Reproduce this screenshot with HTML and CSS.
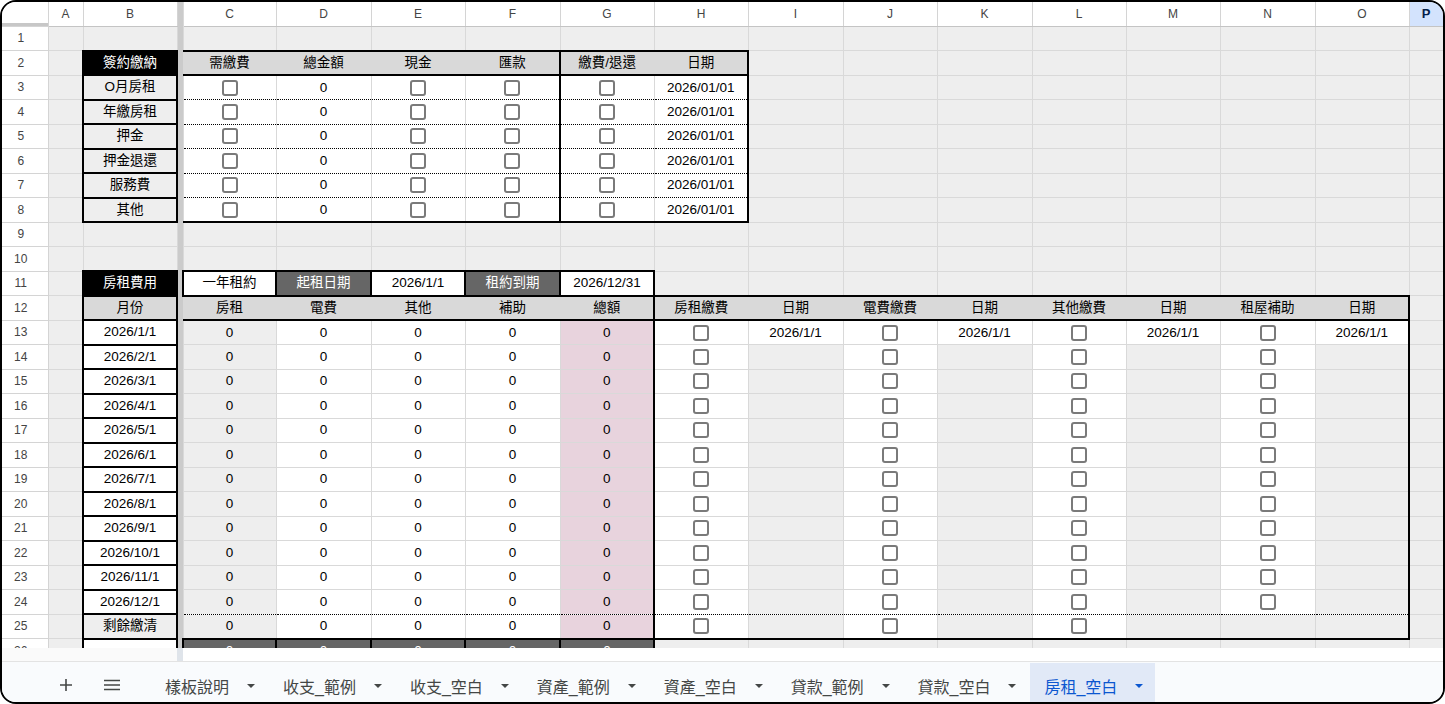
FILE: index.html
```html
<!DOCTYPE html>
<html lang="zh-Hant">
<head>
    <meta charset="UTF-8">
    <title>房租_空白</title>
    <link rel="stylesheet" href="styles.css">
</head>
<body>
<div class="window">
    <div class="grid-wrap">
        <table class="sheet">
            <colgroup>
                <col style="width:46px"><col style="width:35px"><col style="width:94px"><col style="width:6px">
                <col style="width:93px"><col style="width:95px"><col style="width:94px"><col style="width:95px">
                <col style="width:94px"><col style="width:94px"><col style="width:95px"><col style="width:94px">
                <col style="width:95px"><col style="width:94px"><col style="width:94px"><col style="width:95px">
                <col style="width:94px"><col style="width:34px">
            </colgroup>
            <thead>
                <tr class="hdr">
                    <th class="corner"></th><th class="col">A</th><th class="col">B</th><td class="fz"></td>
                    <th class="col">C</th><th class="col">D</th><th class="col">E</th><th class="col">F</th><th class="col">G</th><th class="col">H</th><th class="col">I</th>
                    <th class="col">J</th><th class="col">K</th><th class="col">L</th><th class="col">M</th><th class="col">N</th><th class="col">O</th><th class="col sel">P</th>
                </tr>
            </thead>
            <tbody>
                <tr><th class="rn">1</th><td></td><td></td><td class="fz"></td><td></td><td></td><td></td><td></td><td></td><td></td><td></td><td></td><td></td><td></td><td></td><td></td><td></td><td></td></tr>

                <!-- 簽約繳納 -->
                <tr><th class="rn">2</th><td></td><td class="blk box">簽約繳納</td><td class="fz"></td>
                    <td class="hd t b">需繳費</td><td class="hd t b">總金額</td><td class="hd t b">現金</td><td class="hd t b r">匯款</td><td class="hd t b">繳費/退還</td><td class="hd t b r">日期</td>
                    <td></td><td></td><td></td><td></td><td></td><td></td><td></td><td></td></tr>
                <tr><th class="rn">3</th><td></td><td class="box">O月房租</td><td class="fz"></td>
                    <td class="w d"><span class="cb"></span></td><td class="w d">0</td><td class="w d"><span class="cb"></span></td><td class="w d r"><span class="cb"></span></td><td class="w d"><span class="cb"></span></td><td class="w d r">2026/01/01</td>
                    <td></td><td></td><td></td><td></td><td></td><td></td><td></td><td></td></tr>
                <tr><th class="rn">4</th><td></td><td class="box">年繳房租</td><td class="fz"></td>
                    <td class="w d"><span class="cb"></span></td><td class="w d">0</td><td class="w d"><span class="cb"></span></td><td class="w d r"><span class="cb"></span></td><td class="w d"><span class="cb"></span></td><td class="w d r">2026/01/01</td>
                    <td></td><td></td><td></td><td></td><td></td><td></td><td></td><td></td></tr>
                <tr><th class="rn">5</th><td></td><td class="box">押金</td><td class="fz"></td>
                    <td class="w d"><span class="cb"></span></td><td class="w d">0</td><td class="w d"><span class="cb"></span></td><td class="w d r"><span class="cb"></span></td><td class="w d"><span class="cb"></span></td><td class="w d r">2026/01/01</td>
                    <td></td><td></td><td></td><td></td><td></td><td></td><td></td><td></td></tr>
                <tr><th class="rn">6</th><td></td><td class="box">押金退還</td><td class="fz"></td>
                    <td class="w d"><span class="cb"></span></td><td class="w d">0</td><td class="w d"><span class="cb"></span></td><td class="w d r"><span class="cb"></span></td><td class="w d"><span class="cb"></span></td><td class="w d r">2026/01/01</td>
                    <td></td><td></td><td></td><td></td><td></td><td></td><td></td><td></td></tr>
                <tr><th class="rn">7</th><td></td><td class="box">服務費</td><td class="fz"></td>
                    <td class="w d"><span class="cb"></span></td><td class="w d">0</td><td class="w d"><span class="cb"></span></td><td class="w d r"><span class="cb"></span></td><td class="w d"><span class="cb"></span></td><td class="w d r">2026/01/01</td>
                    <td></td><td></td><td></td><td></td><td></td><td></td><td></td><td></td></tr>
                <tr><th class="rn">8</th><td></td><td class="box">其他</td><td class="fz"></td>
                    <td class="w d b"><span class="cb"></span></td><td class="w d b">0</td><td class="w d b"><span class="cb"></span></td><td class="w d b r"><span class="cb"></span></td><td class="w d b"><span class="cb"></span></td><td class="w d b r">2026/01/01</td>
                    <td></td><td></td><td></td><td></td><td></td><td></td><td></td><td></td></tr>

                <tr><th class="rn">9</th><td></td><td></td><td class="fz"></td><td></td><td></td><td></td><td></td><td></td><td></td><td></td><td></td><td></td><td></td><td></td><td></td><td></td><td></td></tr>
                <tr><th class="rn">10</th><td></td><td></td><td class="fz"></td><td></td><td></td><td></td><td></td><td></td><td></td><td></td><td></td><td></td><td></td><td></td><td></td><td></td><td></td></tr>

                <!-- 房租費用 -->
                <tr><th class="rn">11</th><td></td><td class="blk box">房租費用</td><td class="fz"></td>
                    <td class="w box">一年租約</td><td class="dk box">起租日期</td><td class="w box">2026/1/1</td><td class="dk box">租約到期</td><td class="w box">2026/12/31</td>
                    <td></td><td></td><td></td><td></td><td></td><td></td><td></td><td></td><td></td></tr>
                <tr><th class="rn">12</th><td></td><td class="hd box">月份</td><td class="fz"></td>
                    <td class="hd t b">房租</td><td class="hd t b">電費</td><td class="hd t b">其他</td><td class="hd t b">補助</td><td class="hd t b r">總額</td>
                    <td class="hd t b">房租繳費</td><td class="hd t b">日期</td><td class="hd t b">電費繳費</td><td class="hd t b">日期</td><td class="hd t b">其他繳費</td><td class="hd t b">日期</td><td class="hd t b">租屋補助</td><td class="hd t b r">日期</td><td></td></tr>
                <tr><th class="rn">13</th><td></td><td class="w box">2026/1/1</td><td class="fz"></td>
                    <td>0</td><td class="w">0</td><td class="w">0</td><td class="w">0</td><td class="pk r">0</td>
                    <td class="w"><span class="cb"></span></td><td class="w">2026/1/1</td><td class="w"><span class="cb"></span></td><td class="w">2026/1/1</td><td class="w"><span class="cb"></span></td><td class="w">2026/1/1</td><td class="w"><span class="cb"></span></td><td class="w r">2026/1/1</td><td></td></tr>
                <tr><th class="rn">14</th><td></td><td class="w box">2026/2/1</td><td class="fz"></td>
                    <td>0</td><td class="w">0</td><td class="w">0</td><td class="w">0</td><td class="pk r">0</td>
                    <td class="w"><span class="cb"></span></td><td></td><td class="w"><span class="cb"></span></td><td></td><td class="w"><span class="cb"></span></td><td></td><td class="w"><span class="cb"></span></td><td class="r"></td><td></td></tr>
                <tr><th class="rn">15</th><td></td><td class="w box">2026/3/1</td><td class="fz"></td>
                    <td>0</td><td class="w">0</td><td class="w">0</td><td class="w">0</td><td class="pk r">0</td>
                    <td class="w"><span class="cb"></span></td><td></td><td class="w"><span class="cb"></span></td><td></td><td class="w"><span class="cb"></span></td><td></td><td class="w"><span class="cb"></span></td><td class="r"></td><td></td></tr>
                <tr><th class="rn">16</th><td></td><td class="w box">2026/4/1</td><td class="fz"></td>
                    <td>0</td><td class="w">0</td><td class="w">0</td><td class="w">0</td><td class="pk r">0</td>
                    <td class="w"><span class="cb"></span></td><td></td><td class="w"><span class="cb"></span></td><td></td><td class="w"><span class="cb"></span></td><td></td><td class="w"><span class="cb"></span></td><td class="r"></td><td></td></tr>
                <tr><th class="rn">17</th><td></td><td class="w box">2026/5/1</td><td class="fz"></td>
                    <td>0</td><td class="w">0</td><td class="w">0</td><td class="w">0</td><td class="pk r">0</td>
                    <td class="w"><span class="cb"></span></td><td></td><td class="w"><span class="cb"></span></td><td></td><td class="w"><span class="cb"></span></td><td></td><td class="w"><span class="cb"></span></td><td class="r"></td><td></td></tr>
                <tr><th class="rn">18</th><td></td><td class="w box">2026/6/1</td><td class="fz"></td>
                    <td>0</td><td class="w">0</td><td class="w">0</td><td class="w">0</td><td class="pk r">0</td>
                    <td class="w"><span class="cb"></span></td><td></td><td class="w"><span class="cb"></span></td><td></td><td class="w"><span class="cb"></span></td><td></td><td class="w"><span class="cb"></span></td><td class="r"></td><td></td></tr>
                <tr><th class="rn">19</th><td></td><td class="w box">2026/7/1</td><td class="fz"></td>
                    <td>0</td><td class="w">0</td><td class="w">0</td><td class="w">0</td><td class="pk r">0</td>
                    <td class="w"><span class="cb"></span></td><td></td><td class="w"><span class="cb"></span></td><td></td><td class="w"><span class="cb"></span></td><td></td><td class="w"><span class="cb"></span></td><td class="r"></td><td></td></tr>
                <tr><th class="rn">20</th><td></td><td class="w box">2026/8/1</td><td class="fz"></td>
                    <td>0</td><td class="w">0</td><td class="w">0</td><td class="w">0</td><td class="pk r">0</td>
                    <td class="w"><span class="cb"></span></td><td></td><td class="w"><span class="cb"></span></td><td></td><td class="w"><span class="cb"></span></td><td></td><td class="w"><span class="cb"></span></td><td class="r"></td><td></td></tr>
                <tr><th class="rn">21</th><td></td><td class="w box">2026/9/1</td><td class="fz"></td>
                    <td>0</td><td class="w">0</td><td class="w">0</td><td class="w">0</td><td class="pk r">0</td>
                    <td class="w"><span class="cb"></span></td><td></td><td class="w"><span class="cb"></span></td><td></td><td class="w"><span class="cb"></span></td><td></td><td class="w"><span class="cb"></span></td><td class="r"></td><td></td></tr>
                <tr><th class="rn">22</th><td></td><td class="w box">2026/10/1</td><td class="fz"></td>
                    <td>0</td><td class="w">0</td><td class="w">0</td><td class="w">0</td><td class="pk r">0</td>
                    <td class="w"><span class="cb"></span></td><td></td><td class="w"><span class="cb"></span></td><td></td><td class="w"><span class="cb"></span></td><td></td><td class="w"><span class="cb"></span></td><td class="r"></td><td></td></tr>
                <tr><th class="rn">23</th><td></td><td class="w box">2026/11/1</td><td class="fz"></td>
                    <td>0</td><td class="w">0</td><td class="w">0</td><td class="w">0</td><td class="pk r">0</td>
                    <td class="w"><span class="cb"></span></td><td></td><td class="w"><span class="cb"></span></td><td></td><td class="w"><span class="cb"></span></td><td></td><td class="w"><span class="cb"></span></td><td class="r"></td><td></td></tr>
                <tr><th class="rn">24</th><td></td><td class="w box">2026/12/1</td><td class="fz"></td>
                    <td class="db">0</td><td class="w db">0</td><td class="w db">0</td><td class="w db">0</td><td class="pk r db">0</td>
                    <td class="w db"><span class="cb"></span></td><td class="db"></td><td class="w db"><span class="cb"></span></td><td class="db"></td><td class="w db"><span class="cb"></span></td><td class="db"></td><td class="w db"><span class="cb"></span></td><td class="r db"></td><td></td></tr>
                <tr><th class="rn">25</th><td></td><td class="box">剩餘繳清</td><td class="fz"></td>
                    <td class="dt b">0</td><td class="w dt b">0</td><td class="w dt b">0</td><td class="w dt b">0</td><td class="pk r dt b">0</td>
                    <td class="w dt b"><span class="cb"></span></td><td class="dt b"></td><td class="w dt b"><span class="cb"></span></td><td class="dt b"></td><td class="w dt b"><span class="cb"></span></td><td class="dt b"></td><td class="dt b"></td><td class="r dt b"></td><td></td></tr>
                <tr><th class="rn">26</th><td></td><td class="w box"></td><td class="fz"></td>
                    <td class="dk box">0</td><td class="dk box">0</td><td class="dk box">0</td><td class="dk box">0</td><td class="dk box">0</td>
                    <td></td><td></td><td></td><td></td><td></td><td></td><td></td><td></td><td></td></tr>
            </tbody>
        </table>
    </div>

    <div class="scroll-strip">
        <span class="strip-left"></span>
        <span class="strip-freeze"></span>
    </div>

    <div class="tabbar">
        <span class="tab-btn add">
            <svg width="14" height="14" viewBox="0 0 14 14"><path d="M7 1v12M1 7h12" stroke="#444746" stroke-width="1.6" fill="none"/></svg>
        </span>
        <span class="tab-btn menu">
            <svg width="18" height="14" viewBox="0 0 18 14"><path d="M1 2.5h16M1 7h16M1 11.5h16" stroke="#444746" stroke-width="1.6" fill="none"/></svg>
        </span>
        <div class="tab first">樣板說明<i class="caret"></i></div>
        <div class="tab">收支_範例<i class="caret"></i></div>
        <div class="tab">收支_空白<i class="caret"></i></div>
        <div class="tab">資產_範例<i class="caret"></i></div>
        <div class="tab">資產_空白<i class="caret"></i></div>
        <div class="tab">貸款_範例<i class="caret"></i></div>
        <div class="tab">貸款_空白<i class="caret"></i></div>
        <div class="tab active">房租_空白<i class="caret"></i></div>
    </div>
</div>
</body>
</html>
```

FILE: styles.css
```css
* {
    margin: 0;
    padding: 0;
    box-sizing: border-box;
}

body {
    background: #fff;
    font-family: "Liberation Sans", "Noto Sans CJK TC", sans-serif;
}

.window {
    width: 1445px;
    height: 704px;
    border: 2px solid #000;
    border-radius: 16px;
    overflow: hidden;
    display: flex;
    flex-direction: column;
    background: #fff;
}

.grid-wrap {
    flex: none;
    height: 646px;
    overflow: hidden;
}

/* spreadsheet grid */
.sheet {
    border-collapse: collapse;
    table-layout: fixed;
    width: 1441px;
    font-size: 13.5px;
    color: #000;
}

.sheet thead tr {
    height: 24px;
}

.sheet tbody tr {
    height: 24.5px;
}

.sheet td {
    padding: 0 4px;
    text-align: center;
    vertical-align: middle;
    line-height: 16px;
    white-space: nowrap;
    overflow: hidden;
    background: #eeeeee;
    border: 1px solid #d9d9d9;
}

.sheet th {
    font-weight: normal;
    font-size: 12px;
    color: #444;
    background: #fff;
    border: 1px solid #d4d4d4;
    vertical-align: middle;
}

.sheet .corner {
    border-top: none;
    border-left: none;
    box-shadow: inset 0 -3px 0 #c7c7c7;
}

.sheet .col {
    border-top: none;
    border-bottom-color: #c4c4c4;
}

.sheet .col.sel {
    background: #d3e3fd;
    color: #041e49;
    font-weight: bold;
    font-size: 13px;
}

.sheet .rn {
    border-left: none;
    text-align: center;
    padding-right: 8px;
}

/* frozen column divider */
.sheet .fz {
    background: #cbcbcb;
    border-top: none;
    border-bottom: none;
    padding: 0;
}

/* cell fills */
.sheet .w { background: #fff; }
.sheet .hd { background: #d9d9d9; }
.sheet .pk { background: #e8d3dd; }
.sheet .blk { background: #000; color: #fff; }
.sheet .dk { background: #666; color: #fff; }

/* dotted row separators */
.sheet .d {
    border-top: 1px dotted #000;
    border-bottom: 1px dotted #000;
}
.sheet .dt { border-top: 1px dotted #000; }
.sheet .db { border-bottom: 1px dotted #000; }

/* solid black borders */
.sheet .t { border-top: 2px solid #000; }
.sheet .b { border-bottom: 2px solid #000; }
.sheet .r { border-right: 2px solid #000; }
.sheet .box { border: 2px solid #000; }

.cb {
    display: inline-block;
    width: 16px;
    height: 16px;
    border: 2px solid #7a7a7a;
    border-radius: 3px;
    background: #fff;
    vertical-align: middle;
}

/* horizontal scroll area under the grid */
.scroll-strip {
    flex: none;
    height: 14px;
    display: flex;
    background: #fff;
    border-bottom: 1px solid #e3e3e3;
}

.strip-left {
    width: 175px;
    background: #fafafa;
}

.strip-freeze {
    width: 6px;
    background: #dfe4ea;
}

/* sheet tabs */
.tabbar {
    flex: 1;
    display: flex;
    align-items: stretch;
    background: #f9fbfd;
    color: #444746;
    font-family: "Liberation Sans", "Noto Sans CJK TC", sans-serif;
    font-size: 16px;
}

.tab-btn {
    width: 40px;
    display: flex;
    align-items: center;
    justify-content: center;
    padding-top: 6px;
}

.tab-btn.add {
    margin-left: 44px;
}

.tab-btn.menu {
    margin-left: 6px;
}

.tab {
    display: flex;
    align-items: center;
    padding: 6px 12px 0 14px;
    margin-right: 2px;
    margin-top: 1px;
    white-space: nowrap;
}

.tab.first {
    margin-left: 19px;
}

.caret {
    width: 0;
    height: 0;
    margin-left: 18px;
    border-left: 4px solid transparent;
    border-right: 4px solid transparent;
    border-top: 4px solid #444746;
}

.tab.active {
    background: #e1e9f7;
    color: #0b57d0;
}

.tab.active .caret {
    border-top-color: #0b57d0;
}
```
